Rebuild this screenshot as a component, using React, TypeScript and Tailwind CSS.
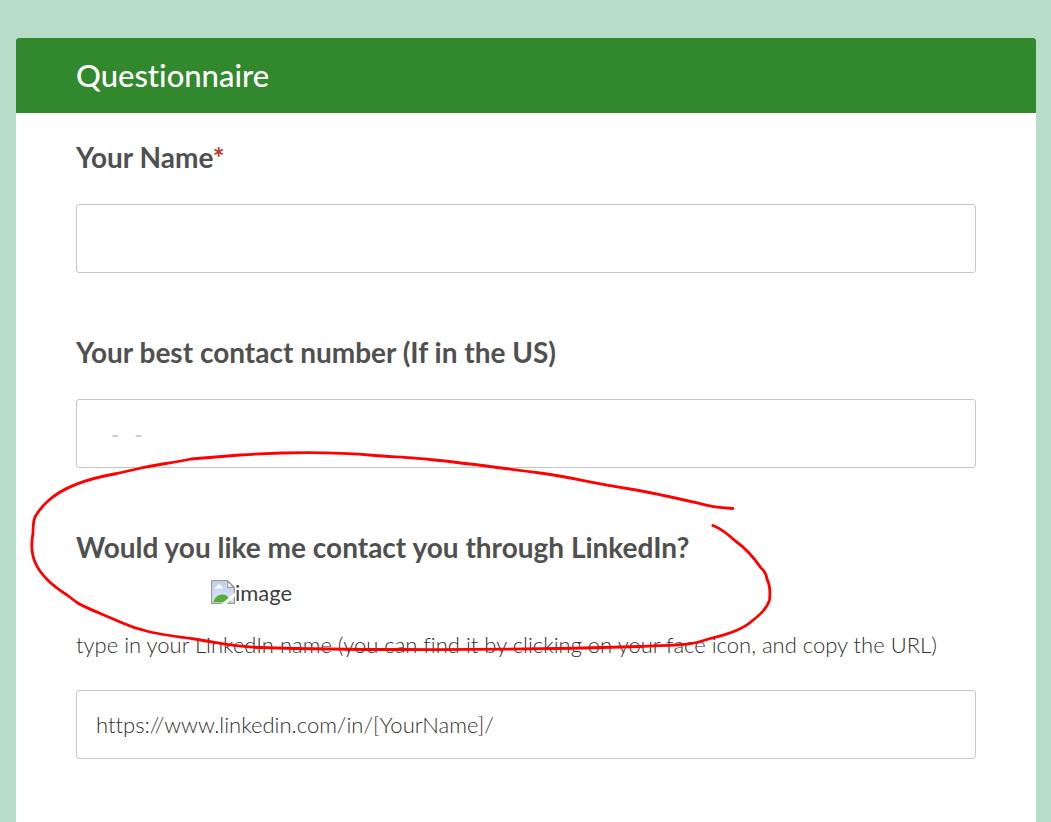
import React from "react";

const fieldClass =
  "block h-[69px] w-full rounded-[3px] border border-[#c6c6c6] bg-white px-[19px] text-[22px] font-light text-[#303030] outline-none placeholder:text-[21px] placeholder:font-bold placeholder:text-[#cfcfcf] placeholder:opacity-100";

const labelClass = "block text-[28px] leading-9 font-bold text-[#505050]";

function BrokenImageIcon() {
  return (
    <svg width="24" height="24" viewBox="0 0 24 24" className="shrink-0" aria-hidden="true">
      <defs>
        <linearGradient id="sky" x1="0" y1="0" x2="0" y2="1">
          <stop offset="0" stopColor="#bdd0f2" />
          <stop offset="1" stopColor="#dbe6fa" />
        </linearGradient>
      </defs>
      <path d="M.75.75H16.5L23.25 7.5V23.25H.75Z" fill="#fff" stroke="#9b9b9b" strokeWidth="1.5" />
      <path d="M1.8 1.8H15.5V8.5H22.2V22.2H1.8Z" fill="url(#sky)" />
      <path d="M4 8.5C4 6.8 5.5 6.5 6 6.5C6.3 3.5 9.7 3.5 10 6.3C11.5 6.3 12 7.5 12 8.5Z" fill="#fff" />
      <path d="M2.2 22.2C4 16.5 8 14.5 11.5 14.5C14.5 14.5 16.5 16 18 18.5L20 22.2Z" fill="#5aac38" />
      <path d="M16.5 1V7.5H23Z" fill="#fff" stroke="#9b9b9b" strokeWidth="1.3" />
      <path d="M24 12.5L10.5 24H15.5L24 16.5Z" fill="#fff" />
    </svg>
  );
}

function HandDrawnCircle() {
  return (
    <svg
      className="pointer-events-none absolute -top-[89px] -left-[60px]"
      width="780"
      height="220"
      viewBox="16 440 780 220"
      fill="none"
      stroke="#ff0000"
      strokeWidth="2.8"
      strokeLinecap="round"
      strokeLinejoin="round"
      aria-hidden="true"
    >
      <path d="M733 508.5L722 507.7Q713 507 705 504.8C680 499 655 493 630 489C590 482.5 570 477 540 473C500 468 470 463.5 430 459.5C415 457.5 390 456.8 375 455.5C330 451.5 285 452 240 455L191 459C173 463 155 464.5 139 468.5L117 473.5C88 478.5 62 488 48 501Q41 507 35 517Q33 522 33 533C31 544 32 555 35 562C41 577 56 588 67 595L77 602.5C85 608 105 615 120 622C140 631 155 634 195 639C225 644 235 647 260 647.5C310 649 350 649.5 400 649.5C500 650 590 648 640 646.5C670 645 690 645.5 702 641L712 638C730 634 743 629 752 621C760 615 767 609 769.5 600Q771 587 767 579Q766 572 761 568C752 555 744 547 736 541.5C730 536 722 529 713 525.5" />
    </svg>
  );
}

export default function App() {
  return (
    <div className="min-h-screen overflow-hidden bg-[#b7ddc8] pt-[38px] pr-[15px] pl-4 font-['Lato',sans-serif] [font-variant-ligatures:none]">
      <main className="min-h-[calc(100vh-38px)] rounded-t-[3px] bg-white">
        <header className="flex h-[75px] items-center rounded-t-[3px] bg-[#32882d] px-[60px] pb-[2px]">
          <h1 className="text-[31px] leading-9 font-medium text-white">Questionnaire</h1>
        </header>
        <form className="flex flex-col gap-[61px] px-[60px] pt-[26px] pb-[60px]">
          <div className="flex flex-col gap-[29px]">
            <label htmlFor="name" className={labelClass}>
              Your Name<span className="text-[#b93a26]">*</span>
            </label>
            <input id="name" type="text" required className={fieldClass} />
          </div>
          <div className="flex flex-col gap-[29px]">
            <label htmlFor="phone" className={labelClass}>
              Your best contact number (If in the US)
            </label>
            <input id="phone" type="tel" placeholder="   -   -" className={fieldClass} />
          </div>
          <div className="relative">
            <label htmlFor="linkedin" className={labelClass}>
              Would you like me contact you through LinkedIn?
            </label>
            <div className="mt-[9px] flex h-9 items-center pl-[135px] text-[22px] text-[#404040]">
              <BrokenImageIcon />
              <span>image</span>
            </div>
            <p id="linkedin-help" className="mt-[17px] mb-[27px] text-[22px] leading-9 font-light text-[#303030]">
              type in your LinkedIn name (you can find it by clicking on your face icon, and copy the URL)
            </p>
            <input
              id="linkedin"
              type="text"
              aria-describedby="linkedin-help"
              defaultValue="https://www.linkedin.com/in/[YourName]/"
              className={fieldClass}
            />
            <HandDrawnCircle />
          </div>
        </form>
      </main>
    </div>
  );
}
